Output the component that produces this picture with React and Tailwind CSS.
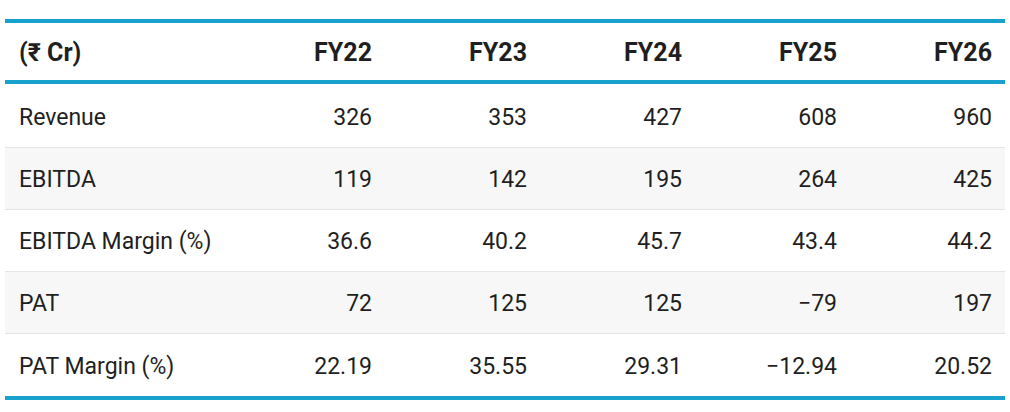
// Financial summary table (₹ Cr), FY22–FY26

const YEARS = ['FY22', 'FY23', 'FY24', 'FY25', 'FY26'];

const ROWS = [
  { label: 'Revenue',           values: ['326', '353', '427', '608', '960'] },
  { label: 'EBITDA',            values: ['119', '142', '195', '264', '425'] },
  { label: 'EBITDA Margin (%)', values: ['36.6', '40.2', '45.7', '43.4', '44.2'] },
  { label: 'PAT',               values: ['72', '125', '125', '\u221279', '197'] },
  { label: 'PAT Margin (%)',    values: ['22.19', '35.55', '29.31', '\u221212.94', '20.52'] },
];

const GRID = 'grid grid-cols-[225px_repeat(5,155px)] items-center';

export default function App() {
  return (
    <div className="bg-white w-[1010px] h-[412px] pt-[19px] pl-[5px] font-['Roboto','Liberation_Sans',sans-serif] text-[#1f1f1f]">
      <div className="w-[1000px] border-y-4 border-[#17a1cc]">

        {/* Header */}
        <div className={`${GRID} h-[61px] pt-[2px] border-b-4 border-[#17a1cc] font-bold text-[25px]`}>
          <div className="pl-[14px]">(₹ Cr)</div>
          {YEARS.map(y => (
            <div key={y} className="text-right pr-[13px]">{y}</div>
          ))}
        </div>

        {/* Body */}
        {ROWS.map((row, i) => (
          <div
            key={row.label}
            className={`${GRID} ${i === 0 ? 'h-[64px] pt-[6px]' : 'h-[62px] pt-[4px]'} text-[23px] ${i % 2 === 1 ? 'bg-[#f7f7f7]' : 'bg-white'} ${i < ROWS.length - 1 ? 'border-b border-[#e4e4e4]' : ''}`}
          >
            <div className="pl-[14px]">{row.label}</div>
            {row.values.map((v, j) => (
              <div key={j} className="text-right pr-[13px]">{v}</div>
            ))}
          </div>
        ))}
      </div>
    </div>
  );
}
